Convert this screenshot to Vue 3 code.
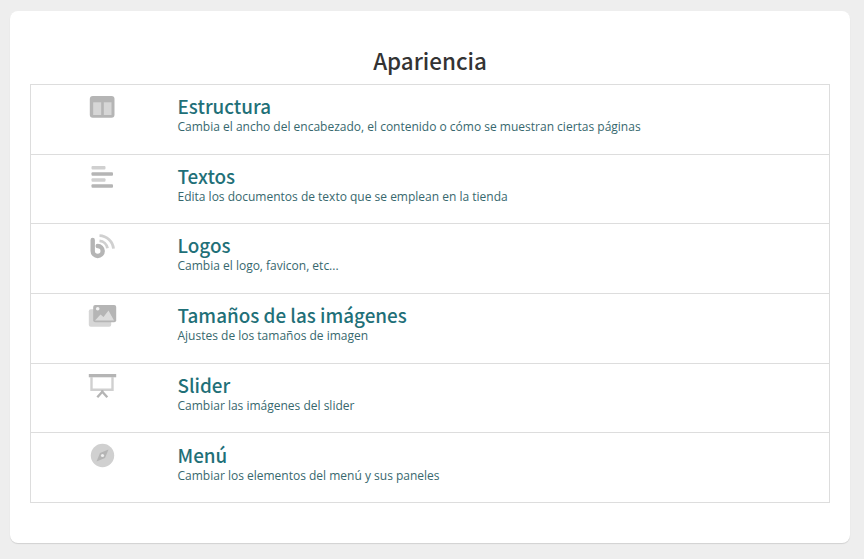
<template>
  <div class="page">
    <section class="card">
      <h1 class="card__title">Apariencia</h1>
      <ul class="menu">
        <li v-for="item in items" :key="item.title" class="menu__row">
          <div class="menu__icon">
            <svg v-if="item.icon === 'layout'" width="26" height="22" viewBox="0 0 26 22">
              <rect x="0.8" y="0" width="24.700" height="21.700" rx="3" fill="#b5b5b5" />
              <rect x="4.200" y="6.300" width="8" height="12.700" fill="#d6d6d6" />
              <rect x="14.800" y="6.300" width="7.700" height="12.700" fill="#d6d6d6" />
            </svg>
            <svg v-else-if="item.icon === 'text'" width="26" height="22" viewBox="0 0 26 22">
              <rect x="2.500" y="0" width="14" height="3.400" rx="1" fill="#d0d0d0" />
              <rect x="2.500" y="6.300" width="21.500" height="3.400" rx="1" fill="#b5b5b5" />
              <rect x="2.500" y="12.300" width="14" height="3.400" rx="1" fill="#d0d0d0" />
              <rect x="2.500" y="18.300" width="21.500" height="3.400" rx="1" fill="#b5b5b5" />
            </svg>
            <svg v-else-if="item.icon === 'logo'" width="28" height="24" viewBox="0 0 28 24">
              <path d="M4.700 5V16a5 5 0 1 0 5-5" fill="none" stroke="#b5b5b5" stroke-width="4.400" stroke-linecap="round" />
              <path d="M11.500 5.800a9 9 0 0 1 8 7.500" fill="none" stroke="#d0d0d0" stroke-width="2.800" />
              <path d="M11.500 0.600a14.500 14.500 0 0 1 14 13" fill="none" stroke="#d0d0d0" stroke-width="2.800" />
            </svg>
            <svg v-else-if="item.icon === 'image'" width="30" height="22" viewBox="0 0 30 22">
              <rect x="1.800" y="4.300" width="22.400" height="17.400" rx="2" fill="#d6d6d6" />
              <rect x="6.200" y="0" width="23" height="17.300" rx="2" fill="#b5b5b5" />
              <path d="M8 15.500l5.500-6 3 2.500 5-6.500 5.500 10z" fill="#dcdcdc" />
              <circle cx="10.700" cy="3.700" r="1.800" fill="#f2f2f2" />
            </svg>
            <svg v-else-if="item.icon === 'slider'" width="28" height="24" viewBox="0 0 28 24">
              <rect x="0.800" y="-1" width="27.400" height="3.300" fill="#b5b5b5" />
              <path d="M3.500 2v12.800h21V2" fill="none" stroke="#d0d0d0" stroke-width="2.400" />
              <path d="M9.300 22.300l5-5.500 5 5.500" fill="none" stroke="#b5b5b5" stroke-width="2.400" />
              <rect x="13.300" y="15" width="2" height="2.500" fill="#b5b5b5" />
            </svg>
            <svg v-else width="24" height="24" viewBox="0 0 24 24">
              <circle cx="12.500" cy="11.500" r="11.700" fill="#d0d0d0" />
              <path d="M18.500 5.500l-3.500 8.500-8.500 3.500 3.500-8.500z" fill="#b5b5b5" />
              <circle cx="12.500" cy="11.500" r="1.600" fill="#eeeeee" />
            </svg>
          </div>
          <div class="menu__text">
            <h2 class="menu__name">{{ item.title }}</h2>
            <p class="menu__desc">{{ item.desc }}</p>
          </div>
        </li>
      </ul>
    </section>
  </div>
</template>

<script setup>
const items = [
  { icon: 'layout', title: 'Estructura', desc: 'Cambia el ancho del encabezado, el contenido o cómo se muestran ciertas páginas' },
  { icon: 'text', title: 'Textos', desc: 'Edita los documentos de texto que se emplean en la tienda' },
  { icon: 'logo', title: 'Logos', desc: 'Cambia el logo, favicon, etc...' },
  { icon: 'image', title: 'Tamaños de las imágenes', desc: 'Ajustes de los tamaños de imagen' },
  { icon: 'slider', title: 'Slider', desc: 'Cambiar las imágenes del slider' },
  { icon: 'compass', title: 'Menú', desc: 'Cambiar los elementos del menú y sus paneles' }
]
</script>

<style scoped>
.page {
  box-sizing: border-box;
  height: 559px;
  padding: 11px 14px 16px 10px;
  background: #eeeeee;
  overflow: hidden;
}

.card {
  box-sizing: border-box;
  height: 532px;
  padding: 31px 20px 0;
  background: #ffffff;
  border-radius: 8px;
  box-shadow: 0 1px 1px rgba(0, 0, 0, 0.12);
}

.card__title {
  margin: 0;
  height: 42px;
  color: #333333;
  font-family: "Noto Sans CJK SC", "Noto Sans", sans-serif;
  font-size: 22.4px;
  font-weight: 500;
  line-height: 36px;
  text-align: center;
}

.menu {
  display: grid;
  grid-template-rows: repeat(5, 69.67px) 69px;
  margin: 0;
  padding: 0;
  border: 1px solid #dddddd;
  list-style: none;
}

.menu__row {
  display: flex;
  border-bottom: 1px solid #dddddd;
}

.menu__row:last-child {
  border-bottom: 0;
}

.menu__row:last-child .menu__text {
  padding-top: 9px;
}

.menu__icon {
  display: flex;
  justify-content: center;
  flex: 0 0 141px;
  padding-top: 11px;
}

.menu__icon svg {
  overflow: visible;
}

.menu__text {
  padding: 8px 0 0 5.5px;
}

.menu__name {
  margin: 0;
  color: #1f7078;
  font-family: "Noto Sans CJK SC", "Noto Sans", sans-serif;
  font-size: 18.85px;
  font-weight: 500;
  line-height: 25px;
}

.menu__desc {
  margin: 1px 0 0;
  color: #37686e;
  font-family: "Open Sans", sans-serif;
  font-size: 12px;
  line-height: 16px;
}
</style>
